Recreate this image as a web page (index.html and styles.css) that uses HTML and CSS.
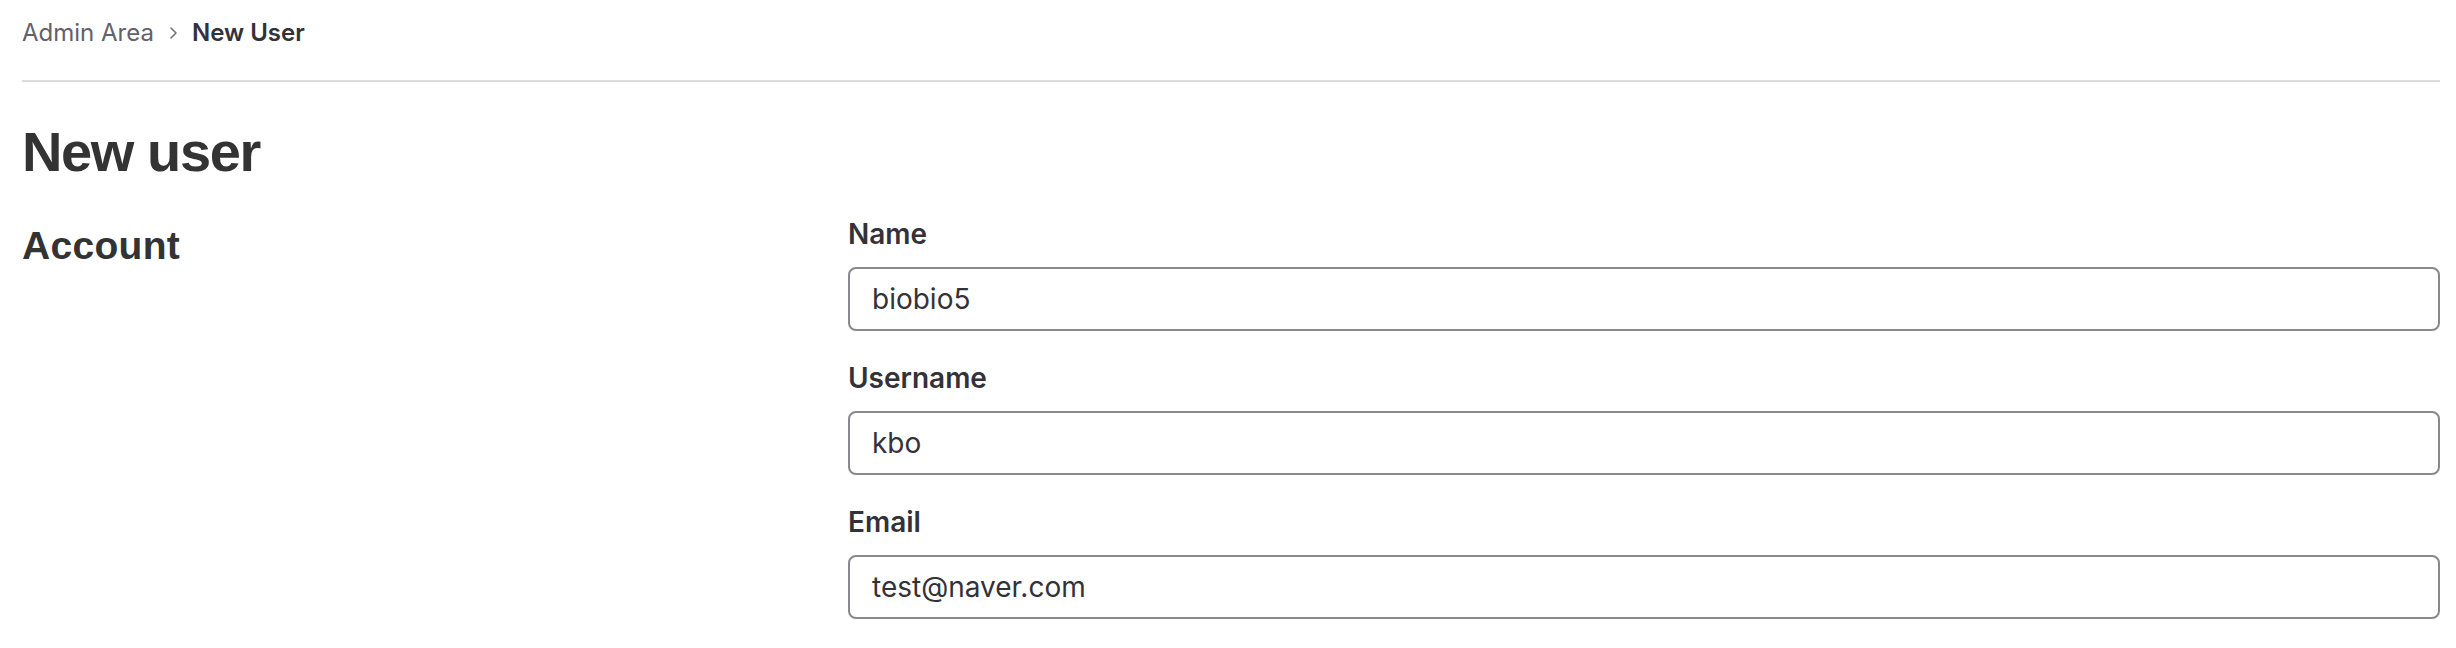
FILE: index.html
```html
<!DOCTYPE html>
<html lang="en">
<head>
<meta charset="utf-8">
<title>New User</title>
<link rel="stylesheet" href="styles.css">
</head>
<body>
<div class="page">
  <nav class="breadcrumbs">
    <span class="crumb">Admin Area</span>
    <svg class="chev" width="10" height="14" viewBox="0 0 10 14"><path d="M3 2l5 5-5 5" fill="none" stroke="#737278" stroke-width="1.6" stroke-linecap="round" stroke-linejoin="round"/></svg>
    <span class="crumb current">New User</span>
  </nav>
  <h1 class="page-title">New user</h1>
  <div class="section">
    <div class="section-side">
      <h4 class="section-title">Account</h4>
    </div>
    <div class="section-body">
      <div class="form-group">
        <label class="label">Name</label>
        <input class="input" type="text" value="biobio5">
      </div>
      <div class="form-group">
        <label class="label">Username</label>
        <input class="input" type="text" value="kbo">
      </div>
      <div class="form-group">
        <label class="label">Email</label>
        <input class="input" type="text" value="test@naver.com">
      </div>
    </div>
  </div>
</div>
</body>
</html>
```

FILE: styles.css
```css
* { box-sizing: border-box; }
html, body { margin: 0; padding: 0; background: #fff; }
body {
  font-family: Inter, "Noto Sans", "Liberation Sans", sans-serif;
  color: #333238;
  height: 648px;
  overflow: hidden;
}
.page {
  padding: 0 16px 0 22px;
}
.breadcrumbs {
  display: flex;
  align-items: center;
  height: 82px;
  padding: 17px 0 31px;
  border-bottom: 2px solid #dcdcde;
  font-size: 24px;
  line-height: 32px;
}
.crumb { color: #626168; }
.crumb.current { color: #333238; font-weight: 600; }
.chev { margin: 0 14px 0 14px; }
.page-title {
  margin: 36px 0 0;
  font-family: "Liberation Sans", Arial, sans-serif;
  font-size: 56px;
  line-height: 68px;
  font-weight: 700;
  letter-spacing: -1.4px;
  color: #333333;
}
.section {
  display: grid;
  grid-template-columns: 796px 1fr;
  column-gap: 30px;
  margin-top: 28px;
}
.section-title {
  margin: 9px 0 0;
  font-family: "Liberation Sans", Arial, sans-serif;
  font-size: 39px;
  line-height: 46px;
  font-weight: 700;
  letter-spacing: 0.3px;
  color: #333333;
}
.form-group {
  display: flex;
  flex-direction: column;
  margin-bottom: 27px;
}
.label {
  font-size: 28px;
  line-height: 40px;
  font-weight: 600;
  margin-bottom: 13px;
}
.input {
  height: 64px;
  width: 100%;
  border: 2px solid #89888d;
  border-radius: 8px;
  padding: 0 22px;
  font-family: inherit;
  font-size: 28px;
  color: #333238;
  background: #fff;
  outline: none;
}
```
